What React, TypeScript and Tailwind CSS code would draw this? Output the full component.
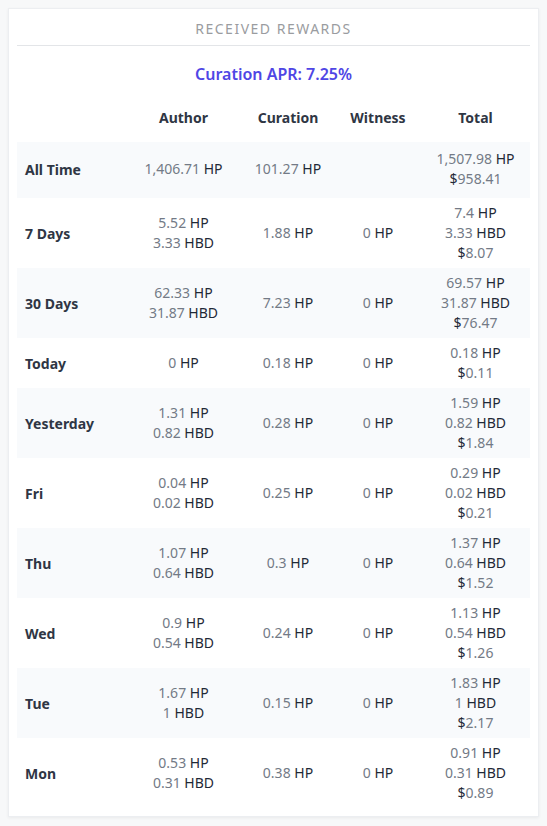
type Amount = { v: string; u?: string; dollar?: boolean }

interface RewardRow {
  label: string
  author: Amount[]
  curation: Amount[]
  witness: Amount[]
  total: Amount[]
  tall?: boolean
}

const hp = (v: string): Amount => ({ v, u: 'HP' })
const hbd = (v: string): Amount => ({ v, u: 'HBD' })
const usd = (v: string): Amount => ({ v, dollar: true })

const rows: RewardRow[] = [
  { label: 'All Time', author: [hp('1,406.71')], curation: [hp('101.27')], witness: [], total: [hp('1,507.98'), usd('958.41')], tall: true },
  { label: '7 Days', author: [hp('5.52'), hbd('3.33')], curation: [hp('1.88')], witness: [hp('0')], total: [hp('7.4'), hbd('3.33'), usd('8.07')] },
  { label: '30 Days', author: [hp('62.33'), hbd('31.87')], curation: [hp('7.23')], witness: [hp('0')], total: [hp('69.57'), hbd('31.87'), usd('76.47')] },
  { label: 'Today', author: [hp('0')], curation: [hp('0.18')], witness: [hp('0')], total: [hp('0.18'), usd('0.11')] },
  { label: 'Yesterday', author: [hp('1.31'), hbd('0.82')], curation: [hp('0.28')], witness: [hp('0')], total: [hp('1.59'), hbd('0.82'), usd('1.84')] },
  { label: 'Fri', author: [hp('0.04'), hbd('0.02')], curation: [hp('0.25')], witness: [hp('0')], total: [hp('0.29'), hbd('0.02'), usd('0.21')] },
  { label: 'Thu', author: [hp('1.07'), hbd('0.64')], curation: [hp('0.3')], witness: [hp('0')], total: [hp('1.37'), hbd('0.64'), usd('1.52')] },
  { label: 'Wed', author: [hp('0.9'), hbd('0.54')], curation: [hp('0.24')], witness: [hp('0')], total: [hp('1.13'), hbd('0.54'), usd('1.26')] },
  { label: 'Tue', author: [hp('1.67'), hbd('1')], curation: [hp('0.15')], witness: [hp('0')], total: [hp('1.83'), hbd('1'), usd('2.17')] },
  { label: 'Mon', author: [hp('0.53'), hbd('0.31')], curation: [hp('0.38')], witness: [hp('0')], total: [hp('0.91'), hbd('0.31'), usd('0.89')] },
]

const Cell = ({ items, extra = '' }: { items: Amount[]; extra?: string }) => (
  <div className={`flex flex-col items-center justify-center text-center ${extra}`}>
    {items.map((a, i) => (
      <div key={i} className="leading-5 whitespace-nowrap">
        {a.dollar ? (
          <>
            <span className="text-[#1f2937]">$</span>
            <span className="text-[#737a86]">{a.v}</span>
          </>
        ) : (
          <>
            <span className="text-[#737a86]">{a.v}</span> <span className="text-[#1f2937]">{a.u}</span>
          </>
        )}
      </div>
    ))}
  </div>
)

const gridCols = 'grid grid-cols-[114px_105px_104px_76px_115px]'

export default function App() {
  return (
    <div className="min-h-screen bg-[#f7f8f9] p-2 font-['Noto_Sans',sans-serif] text-[14px]">
      <div className="bg-white border border-[#eceef1] shadow-[0_1px_3px_rgba(0,0,0,0.06)] px-2 pb-2">
        <div className="h-[37px] flex items-center justify-center border-b border-[#e3e5e8]">
          <span className="text-[14px] tracking-[1.5px] text-[#9a9ca0] pt-[2px]">RECEIVED REWARDS</span>
        </div>

        <div className="pt-4 text-center text-[16px] leading-6 font-semibold text-[#4f46e5]">
          Curation APR: 7.25%
        </div>

        <div className={`${gridCols} pt-[22px] pb-[14px] font-bold text-[#2f3644] leading-5`}>
          <div />
          <div className="text-center">Author</div>
          <div className="text-center">Curation</div>
          <div className="text-center">Witness</div>
          <div className="text-center pl-[4px]">Total</div>
        </div>

        <div>
          {rows.map((r, i) => (
            <div
              key={r.label}
              className={`${gridCols} ${r.tall ? 'pt-[7px] pb-[9px]' : 'py-[5px]'} ${i % 2 === 0 ? 'bg-[#f8fafc]' : 'bg-white'}`}
            >
              <div className="flex items-center px-2 font-bold text-[#2f3644]">{r.label}</div>
              <Cell items={r.author} />
              <Cell items={r.curation} />
              <Cell items={r.witness} />
              <Cell items={r.total} extra="pl-[4px]" />
            </div>
          ))}
        </div>
      </div>
    </div>
  )
}
